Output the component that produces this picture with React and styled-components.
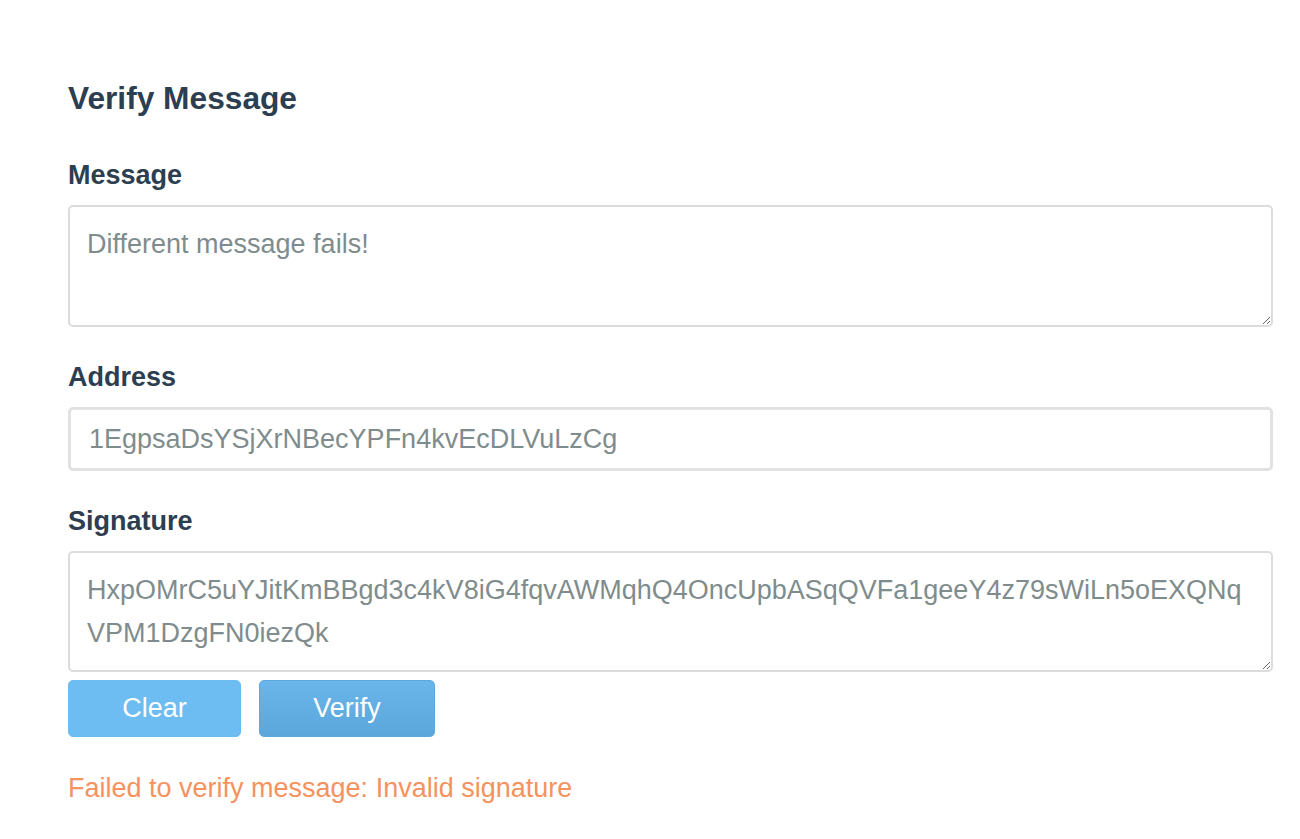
import React from "react";
import styled, { createGlobalStyle } from "styled-components";

const Global = createGlobalStyle`
  html, body { margin: 0; padding: 0; background: #fff; }
  body { font-family: "Liberation Sans", Arial, Helvetica, sans-serif; }
  * { box-sizing: border-box; }
`;

const Page = styled.div`
  padding: 78px 27px 0 68px;
  display: flex;
  flex-direction: column;
`;

const Title = styled.h2`
  margin: 0 0 42px;
  font-size: 31.7px;
  line-height: 40px;
  font-weight: 700;
  color: #2c3e50;
`;

const Label = styled.label`
  display: block;
  font-size: 27px;
  line-height: 30px;
  font-weight: 700;
  color: #2c3e50;
  margin: 0 0 15px;
`;

const Field = styled.div`
  display: flex;
  flex-direction: column;
  margin-bottom: ${(p) => p.$mb || 0}px;
`;

const Area = styled.textarea`
  width: 100%;
  height: ${(p) => p.$h || 122}px;
  border: 2px solid #dcdcdc;
  border-radius: 5px;
  padding: 16px 17px 10px;
  font-family: inherit;
  font-size: 27px;
  line-height: 43px;
  color: #7f8c8d;
  resize: vertical;
  outline: none;
  background: #fff;
`;

const Input = styled.input`
  width: 100%;
  height: 64px;
  border: 3px solid #e2e2e2;
  border-radius: 5px;
  padding: 0 18px;
  font-family: inherit;
  font-size: 27px;
  color: #7f8c8d;
  outline: none;
  background: #fff;
`;

const Buttons = styled.div`
  display: flex;
  gap: 18px;
  margin-top: 8px;
`;

const Button = styled.button`
  width: ${(p) => p.$w}px;
  height: 57px;
  border: 1px solid ${(p) => (p.$primary ? "#5aa8de" : "#6bbcf2")};
  border-radius: 5px;
  background: ${(p) =>
    p.$primary
      ? "linear-gradient(to bottom, #6ab6ea, #5ba7dc)"
      : "#6dbdf3"};
  color: #fff;
  font-family: inherit;
  font-size: 27px;
  cursor: pointer;
  padding: 0;
`;

const ErrorText = styled.div`
  margin-top: 34px;
  font-size: 27px;
  line-height: 34px;
  color: #f5925e;
`;

export default function App() {
  return (
    <>
      <Global />
      <Page>
        <Title>Verify Message</Title>
        <Field $mb={35}>
          <Label>Message</Label>
          <Area defaultValue="Different message fails!" />
        </Field>
        <Field $mb={35}>
          <Label>Address</Label>
          <Input defaultValue="1EgpsaDsYSjXrNBecYPFn4kvEcDLVuLzCg" />
        </Field>
        <Field>
          <Label>Signature</Label>
          <Area
            $h={121}
            defaultValue="HxpOMrC5uYJitKmBBgd3c4kV8iG4fqvAWMqhQ4OncUpbASqQVFa1geeY4z79sWiLn5oEXQNqVPM1DzgFN0iezQk"
          />
        </Field>
        <Buttons>
          <Button $w={173}>Clear</Button>
          <Button $w={176} $primary>Verify</Button>
        </Buttons>
        <ErrorText>Failed to verify message: Invalid signature</ErrorText>
      </Page>
    </>
  );
}
